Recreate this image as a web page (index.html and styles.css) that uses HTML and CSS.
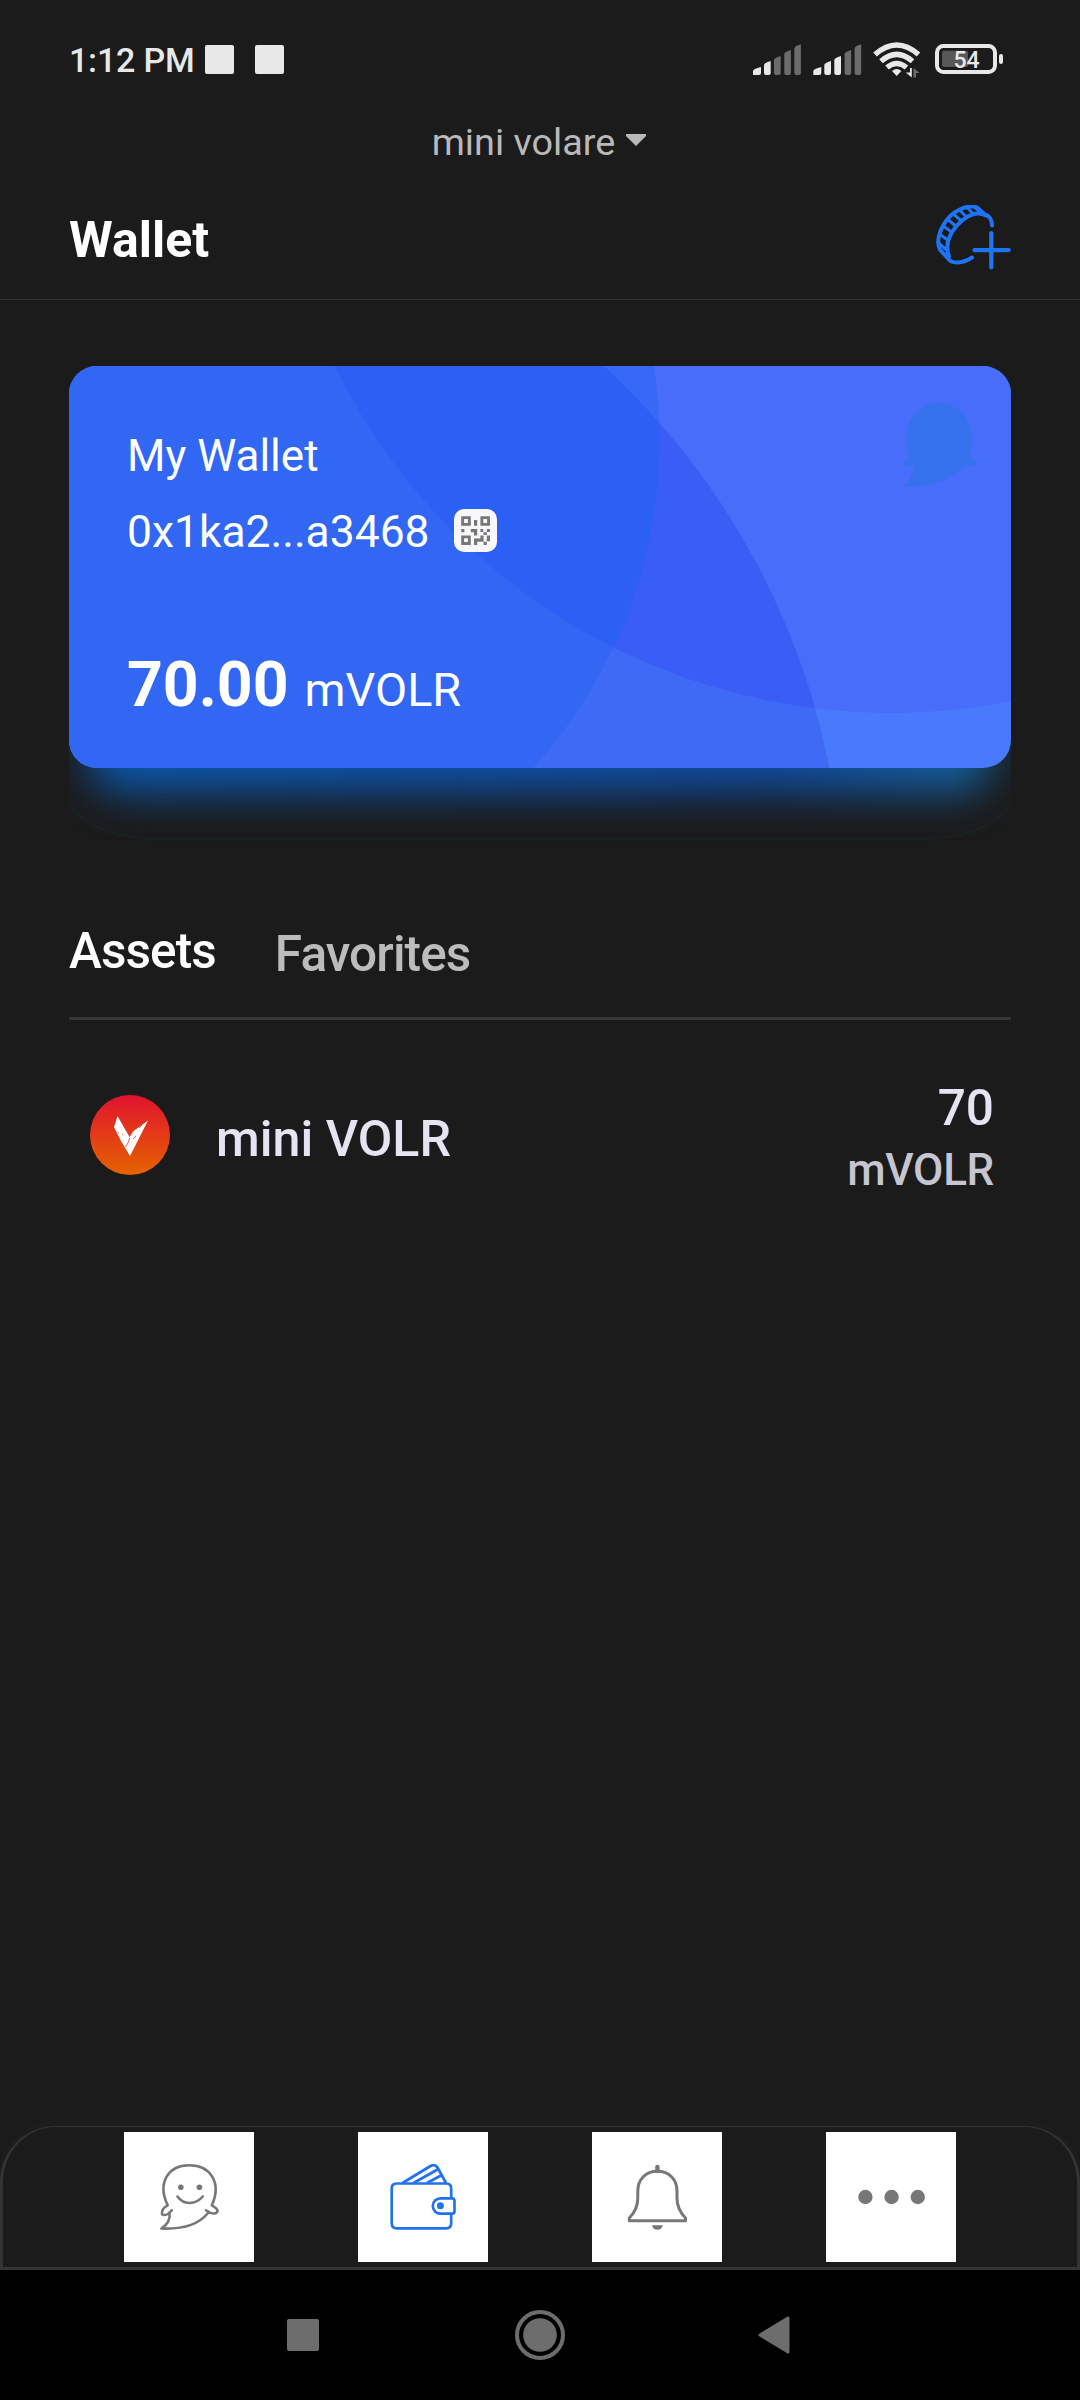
FILE: index.html
```html
<!DOCTYPE html>
<html lang="en">
<head>
<meta charset="utf-8">
<title>Wallet</title>
<link rel="stylesheet" href="styles.css">
</head>
<body>
<div class="screen">
  <div class="status">
    <span class="clock">1:12 PM</span>
    <span class="notice"></span>
    <span class="notice"></span>
    <svg class="status-icons" width="254" height="40" viewBox="750 40 254 40">
      <defs>
        <g id="bars">
          <path d="M753 75v-4q0-2 8-4v6q0 2-2 2z"/>
          <path d="M764 73v-8q0-2 6.700-4v12q0 2-2 2h-2.700q-2 0-2-2z"/>
        </g>
        <path id="bar3" d="M774 73V60q0-2 6.700-4v17q0 2-2 2H776q-2 0-2-2z"/>
        <path id="bar4" d="M784.300 73V54q0-2 6.600-4v23q0 2-2 2h-2.600q-2 0-2-2z"/>
        <path id="bar5" d="M794.300 73V49q0-3 6.600-4.700V73q0 2-2 2h-2.600q-2 0-2-2z"/>
      </defs>
      <g fill="#e8e8e8">
        <use href="#bars"/><use href="#bars" x="60.300"/><use href="#bar3" x="60.300"/>
      </g>
      <g fill="#6c6c6c">
        <use href="#bar3"/><use href="#bar4"/><use href="#bar5"/>
        <use href="#bar4" x="60.300"/><use href="#bar5" x="60.300"/>
      </g>
      <g fill="none" stroke="#e8e8e8" stroke-width="5.400">
        <path d="M875 54.500Q896.700 35.500 918.500 54.500"/>
        <path d="M881 61.300Q896.700 47.500 912.500 61.300"/>
        <path d="M887 67.500Q896.700 59.500 906.500 67.500"/>
      </g>
      <path d="M892 71q4.700-4 9.400 0l-4.700 5z" fill="#e8e8e8"/>
      <path d="M910 68h1.800v9.500l-6-5h4.200z" fill="#e8e8e8"/>
      <path d="M913.500 77.500V68l6 5h-3.500v4.500z" fill="#6c6c6c"/>
      <rect x="942" y="50.700" width="26" height="16.300" rx="2" fill="#575757"/>
      <rect x="937" y="46" width="58" height="26" rx="6.500" fill="none" stroke="#e8e8e8" stroke-width="4"/>
      <rect x="999" y="54" width="4" height="10" rx="2" fill="#e8e8e8"/>
      <text class="charge" x="966.500" y="68" text-anchor="middle">54</text>
    </svg>
  </div>

  <div class="network">
    <span>mini volare</span>
    <svg width="20" height="12" viewBox="0 0 20 12"><path d="M0 0h20v2L10 12 0 2z" fill="#b9b9b9"/></svg>
  </div>

  <header class="header">
    <h1>Wallet</h1>
    <svg class="add-coin" width="76" height="65" viewBox="935 204.500 76 65" fill="none" stroke="#1f74f5" stroke-width="4" stroke-linecap="round">
      <path d="M992 225c0-6-3-10-7-11l-8-7c-8-3-20 1-29 11-9 11-12 23-8 31l8 9c4 6 15 5 24-1"/>
      <path d="M986 215c-9-5-20 0-29 10-8 9-12 20-8 31"/>
      <path d="M938 242l8 7M940 234l7 5M944 226l7 5M948 219l7 6M954 214l7 6M960 210l6 6M967 207l6 6M974 206l7 7" stroke-width="3"/>
      <path d="M991.300 232.500v34.500M974.500 249.600h34.200" stroke-width="4.200"/>
    </svg>
  </header>

  <main class="content">
    <section class="card">
      <svg class="card-art" width="942" height="480" viewBox="69 366 942 480">
        <defs>
          <clipPath id="face"><rect x="69" y="366" width="942" height="402" rx="28"/></clipPath>
          <clipPath id="dish"><circle cx="891" cy="94" r="619"/></clipPath>
          <clipPath id="hill"><circle cx="104" cy="911" r="739.400"/></clipPath>
          <linearGradient id="glow" x1="0" x2="1" y1="0" y2="0">
            <stop offset="0" stop-color="#0b57ab"/>
            <stop offset=".5" stop-color="#0e4fa6"/>
            <stop offset=".75" stop-color="#104a9e"/>
            <stop offset="1" stop-color="#1462a0"/>
          </linearGradient>
          <filter id="soft" x="-20%" y="-50%" width="140%" height="200%" color-interpolation-filters="sRGB"><feGaussianBlur stdDeviation="21"/></filter>
        </defs>
        <path d="M69 806Q98 839 160 839H920Q982 839 1011 806" fill="none" stroke="#1b2221" stroke-width="2"/>
        <rect x="88" y="600" width="904" height="193" rx="36" fill="url(#glow)" filter="url(#soft)"/>
        <g clip-path="url(#face)">
          <rect x="69" y="366" width="942" height="402" fill="#487afb"/>
          <circle cx="104" cy="911" r="739.400" fill="#3e6af5"/>
          <circle cx="171" cy="440" r="488.500" fill="#3167f3"/>
          <g clip-path="url(#dish)">
            <rect x="69" y="366" width="942" height="402" fill="#476dfa"/>
            <circle cx="104" cy="911" r="739.400" fill="#3a5df6"/>
            <circle cx="171" cy="440" r="488.500" fill="#3769f6"/>
            <g clip-path="url(#hill)"><circle cx="171" cy="440" r="488.500" fill="#2c5ff4"/></g>
          </g>
        </g>
        <path d="M939 403c20 0 33 17 33 38 0 6-1 12-2 15 3 2 5 4 6 8-3 2-8 2-11 1-15 16-36 23-63 22 7-5 11-12 12-21-3 1-8 1-11 0 1-5 3-8 7-10-3-6-4-11-4-17 1-21 14-36 33-36z" fill="#3671ee"/>
      </svg>
      <div class="card-body">
        <p class="card-name">My Wallet</p>
        <p class="card-address">
          <span>0x1ka2...a3468</span>
          <svg class="qr" width="43" height="43" viewBox="0 0 43 43">
            <rect width="43" height="43" rx="10" fill="#f8f8fb"/>
            <g transform="translate(7.200 7.200) scale(3.200)" fill="#777">
              <path fill-rule="evenodd" d="M0 0h3v3H0zM.9.900v1.200h1.200V.9zM6 0h3v3H6zM6.900.900v1.200h1.200V.9zM0 6h3v3H0zM.9 6.900v1.200h1.200V6.900z"/>
              <path d="M4 1.200h1V3H4zM0 4h1v1H0zM3 4h2v2H4V5H3zM6 4h.9v.9H6zM8 4h1v.9H8zM7 5h1v.9H7zM6 6h1v2H5v1H4V7h2zM8 6h1v1.800H8zM7 8h1v1H7z"/>
            </g>
          </svg>
        </p>
        <p class="card-balance"><strong>70.00</strong><span>mVOLR</span></p>
      </div>
    </section>

    <nav class="tabs">
      <span class="tab active">Assets</span>
      <span class="tab">Favorites</span>
    </nav>

    <div class="asset">
      <svg width="80" height="80" viewBox="0 0 80 80">
        <defs><linearGradient id="ember" x1="0" x2="0" y1="0" y2="1"><stop offset="0" stop-color="#e0122f"/><stop offset="1" stop-color="#e66300"/></linearGradient></defs>
        <circle cx="40" cy="40" r="40" fill="url(#ember)"/>
        <path d="M27.500 21l12 21 4-6 14.500-10.500L40 61 31 46l-7-14z" fill="#fff"/>
        <path d="M39.500 43l-1 4-3 5M28 37l1 1M33 39l-1 1M52 30l-3 3M46 41l-3 3" stroke="#e2451a" stroke-width=".8" fill="none"/>
      </svg>
      <span class="asset-name">mini VOLR</span>
      <div class="asset-value"><span class="amount">70</span><span class="unit">mVOLR</span></div>
    </div>
  </main>

  <nav class="tabbar">
    <div class="tabbar-item">
      <svg width="130" height="130" viewBox="0 0 130 130" fill="none" stroke="#777" stroke-width="2.600" stroke-linecap="round" stroke-linejoin="round">
        <path d="M43.700 73.300C33 51 44 33.200 65.300 33.200S98 51 87.800 73.300c3.500 2 5.500 3.500 5.800 5.500-.6 3-4.600 4.500-11.600-.5M43.700 73.300c-4 2-6.200 5-5.700 9 3 1.500 7 0 9.800-4M45.400 80.500c1.200 6-2 12-8 16 22 1 37-4 46.200-15"/>
        <path d="M53.500 64.500c6 8.600 18 8.600 25.300 0"/>
        <circle cx="56.800" cy="55.300" r="2.800" fill="#777" stroke="none"/><circle cx="75.400" cy="55.300" r="2.800" fill="#777" stroke="none"/>
      </svg>
    </div>
    <div class="tabbar-item">
      <svg width="130" height="130" viewBox="0 0 130 130" fill="none" stroke="#2272f0" stroke-width="2.700" stroke-linejoin="round">
        <path d="M93.200 66.300V56.500q0-5-5-5H38.700q-5 0-5 5v34.800q0 5 5 5h49.500q5 0 5-5v-9.600"/>
        <path d="M94 66.300H82.500a7.700 7.700 0 0 0 0 15.400H94q2.500 0 2.500-2.500V68.800q0-2.500-2.500-2.500z"/>
        <circle cx="82.400" cy="73.700" r="3.500" fill="#2272f0" stroke="none"/>
        <path d="M44.500 51 72.500 34q4.500-2.500 7 1.500L88 51M55.500 51l24-13.500M69 51l14-7.500"/>
      </svg>
    </div>
    <div class="tabbar-item">
      <svg width="130" height="130" viewBox="0 0 130 130" fill="none" stroke="#777" stroke-width="3" stroke-linejoin="round">
        <path d="M65.400 39.200c-11.500 0-19.600 8-19.600 20V66c0 9-3 14.500-8.500 20v2.700h56.200V86C88 80.500 85 75 85 66v-6.800c0-12-8.100-20-19.600-20z"/>
        <path d="M65.400 35v4" stroke-width="4.400" stroke-linecap="round"/>
        <path d="M60 93.300h10.800c-1 6-9.800 6-10.800 0z" fill="#777" stroke="none"/>
      </svg>
    </div>
    <div class="tabbar-item">
      <svg width="130" height="130" viewBox="0 0 130 130" fill="#777"><circle cx="39.400" cy="65" r="7.200"/><circle cx="65.600" cy="65" r="7.200"/><circle cx="91.800" cy="65" r="7.200"/></svg>
    </div>
  </nav>

  <div class="system">
    <svg width="32" height="32" viewBox="0 0 32 32"><rect width="32" height="32" rx="2" fill="#6d6d6d"/></svg>
    <svg class="home" width="50" height="50" viewBox="0 0 50 50"><circle cx="25" cy="25" r="23" fill="none" stroke="#6d6d6d" stroke-width="4"/><circle cx="25" cy="25" r="16.800" fill="#6d6d6d"/></svg>
    <svg width="32" height="38" viewBox="0 0 32 38"><path d="M2 19 30 2v34z" fill="#6d6d6d" stroke="#6d6d6d" stroke-width="3" stroke-linejoin="round"/></svg>
  </div>
</div>
</body>
</html>
```
FILE: styles.css
```css
* { box-sizing: border-box; }
body { margin: 0; background: #1b1b1b; }
h1, p { margin: 0; }
svg { display: block; flex: none; }
.screen {
  width: 1080px;
  height: 2400px;
  display: flex;
  flex-direction: column;
  background: #1b1b1b;
  font-family: Roboto, sans-serif;
  color: #fff;
  overflow: hidden;
  white-space: nowrap;
}
.status {
  height: 119px;
  padding: 0 76px 0 69px;
  display: flex;
  align-items: center;
}
.clock { width: 136px; font-size: 34px; font-weight: 500; letter-spacing: -.2px; color: #e8e8e8; }
.notice { width: 29px; height: 29px; margin-right: 21px; border-radius: 2px; background: #e8e8e8; }
.status-icons { margin-left: auto; }
.charge { font: 500 23px Roboto, sans-serif; fill: #e8e8e8; }
.network {
  height: 45px;
  display: flex;
  justify-content: center;
  align-items: center;
  gap: 11px;
  padding-right: 2px;
  font-size: 37.800px;
  color: #b9b9b9;
}
.network svg { margin-top: -3px; }
.header {
  height: 136px;
  padding: 41px 69px 0;
  display: flex;
  justify-content: space-between;
  align-items: flex-start;
  border-bottom: 1px solid #353535;
}
.header h1 { font-size: 50px; font-weight: 700; line-height: 70px; }
.content { flex: 1; padding: 66px 69px 0; }
.card { position: relative; height: 480px; overflow: hidden; }
.card-art { position: absolute; inset: 0; }
.card-body { position: relative; padding: 60px 58px 0; }
.card-name { font-size: 44px; line-height: 60px; }
.card-address { display: flex; align-items: center; height: 76px; margin-top: 8px; gap: 24px; font-size: 44.400px; }
.qr { margin-top: -3px; }
.card-balance { display: flex; align-items: baseline; margin-top: 77px; gap: 16px; font-size: 46.750px; line-height: 76px; }
.card-balance strong { font-size: 62.500px; font-weight: 700; }
.tabs {
  display: flex;
  height: 174px;
  padding-top: 72px;
  gap: 59px;
  border-bottom: 3px solid #363636;
}
.tab { font-size: 49.500px; font-weight: 500; line-height: 66px; letter-spacing: -.9px; color: #bcbcbc; padding-top: 3px; }
.tab.active { color: #fff; padding-top: 0; }
.asset { display: flex; align-items: center; height: 230px; padding: 0 17px 0 21px; }
.asset-name { margin-left: 46px; font-size: 50.200px; font-weight: 500; color: #e6e4f2; padding-top: 6px; }
.asset-value { margin-left: auto; display: flex; flex-direction: column; align-items: flex-end; font-weight: 500; padding-top: 6px; }
.amount { font-size: 49.500px; line-height: 64px; color: #e6e4f2; }
.unit { font-size: 44px; line-height: 61px; letter-spacing: -.3px; color: #c6c6d2; }
.tabbar {
  height: 144px;
  padding: 5px 121px 0;
  display: flex;
  justify-content: space-between;
  background: #1b1b1b;
  border: 3px solid #343434;
  border-top-width: 1px;
  border-radius: 56px 56px 0 0;
  box-shadow: 0 0 14px rgba(255, 255, 255, .035);
}
.tabbar-item { width: 130px; height: 130px; background: #fff; }
.system {
  height: 130px;
  padding: 0 290px 0 287px;
  display: flex;
  justify-content: space-between;
  align-items: center;
  background: #000;
}
.home { margin-left: 3px; }
```
